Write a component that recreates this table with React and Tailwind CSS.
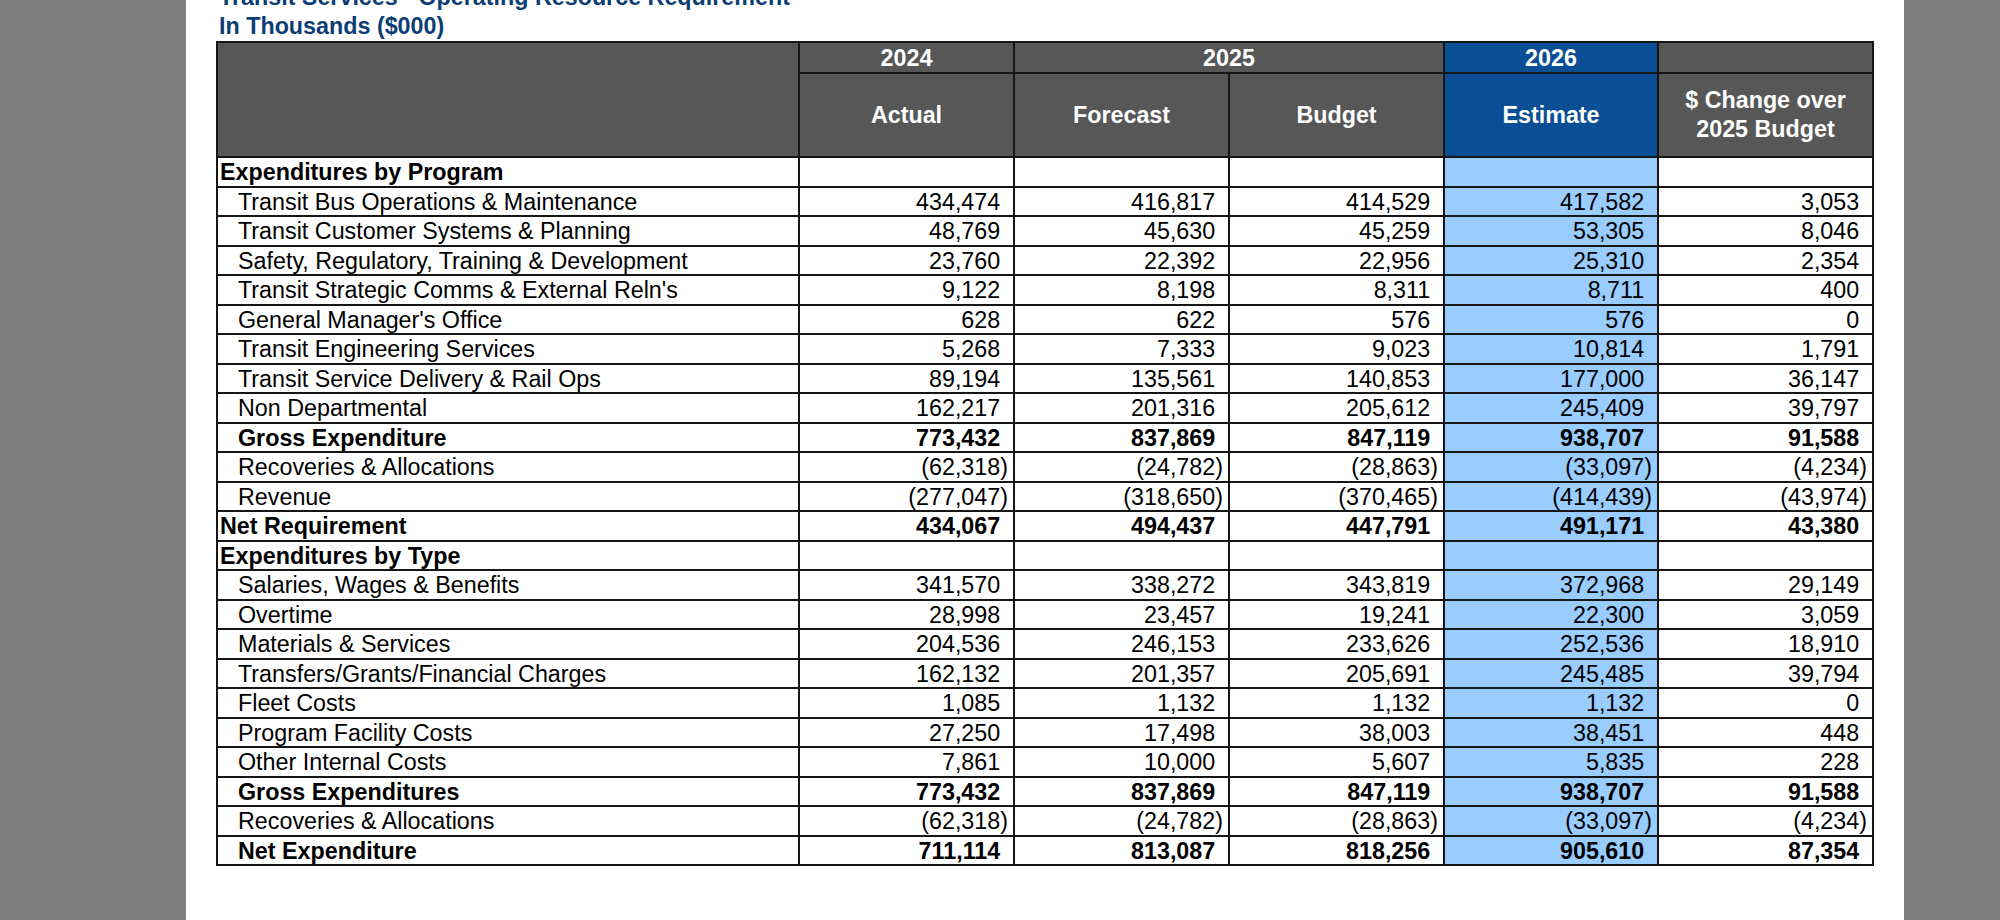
import React from "react";

const rows = [
  { label: "Expenditures by Program", kind: "section" },
  { label: "Transit Bus Operations & Maintenance", v: ["434,474", "416,817", "414,529", "417,582", "3,053"] },
  { label: "Transit Customer Systems & Planning", v: ["48,769", "45,630", "45,259", "53,305", "8,046"] },
  { label: "Safety, Regulatory, Training & Development", v: ["23,760", "22,392", "22,956", "25,310", "2,354"] },
  { label: "Transit Strategic Comms & External Reln's", v: ["9,122", "8,198", "8,311", "8,711", "400"] },
  { label: "General Manager's Office", v: ["628", "622", "576", "576", "0"] },
  { label: "Transit Engineering Services", v: ["5,268", "7,333", "9,023", "10,814", "1,791"] },
  { label: "Transit Service Delivery & Rail Ops", v: ["89,194", "135,561", "140,853", "177,000", "36,147"] },
  { label: "Non Departmental", v: ["162,217", "201,316", "205,612", "245,409", "39,797"] },
  { label: "Gross Expenditure", kind: "boldIndent", v: ["773,432", "837,869", "847,119", "938,707", "91,588"] },
  { label: "Recoveries & Allocations", v: ["(62,318)", "(24,782)", "(28,863)", "(33,097)", "(4,234)"] },
  { label: "Revenue", v: ["(277,047)", "(318,650)", "(370,465)", "(414,439)", "(43,974)"] },
  { label: "Net Requirement", kind: "bold", v: ["434,067", "494,437", "447,791", "491,171", "43,380"] },
  { label: "Expenditures by Type", kind: "section" },
  { label: "Salaries, Wages & Benefits", v: ["341,570", "338,272", "343,819", "372,968", "29,149"] },
  { label: "Overtime", v: ["28,998", "23,457", "19,241", "22,300", "3,059"] },
  { label: "Materials & Services", v: ["204,536", "246,153", "233,626", "252,536", "18,910"] },
  { label: "Transfers/Grants/Financial Charges", v: ["162,132", "201,357", "205,691", "245,485", "39,794"] },
  { label: "Fleet Costs", v: ["1,085", "1,132", "1,132", "1,132", "0"] },
  { label: "Program Facility Costs", v: ["27,250", "17,498", "38,003", "38,451", "448"] },
  { label: "Other Internal Costs", v: ["7,861", "10,000", "5,607", "5,835", "228"] },
  { label: "Gross Expenditures", kind: "boldIndent", v: ["773,432", "837,869", "847,119", "938,707", "91,588"] },
  { label: "Recoveries & Allocations", v: ["(62,318)", "(24,782)", "(28,863)", "(33,097)", "(4,234)"] },
  { label: "Net Expenditure", kind: "boldIndent", v: ["711,114", "813,087", "818,256", "905,610", "87,354"] },
];

function Num({ s }) {
  if (s.startsWith("(")) return <span>{s}</span>;
  return (
    <span>
      {s}
      <span className="invisible">)</span>
    </span>
  );
}

export default function App() {
  const font = { fontFamily: '"Liberation Sans", Arial, sans-serif' };
  const hdr = "bg-[#575757] border-r-2 border-b-2 border-[#161616] text-white font-bold flex justify-center";
  const hdrBlue = "bg-[#0a4f95] border-r-2 border-b-2 border-[#161616] text-white font-bold flex justify-center";
  return (
    <div className="w-[2000px] h-[920px] overflow-hidden bg-[#7f7f7f] flex" style={font}>
      <div className="w-[186px] shrink-0" />
      <div className="w-[1718px] shrink-0 h-full bg-white pl-[30px] text-[23.3px]">
        <div className="text-[#0d3d74] font-bold leading-[28px] pl-[3px] mb-[1px]">
          <div className="mt-[-17px]">Transit Services - Operating Resource Requirement</div>
          <div className="mt-[1px]">In Thousands ($000)</div>
        </div>
        <div className="grid w-[1658px] grid-cols-[582px_215px_215px_215px_214px_215px] grid-rows-[31px_84px_repeat(24,29.5px)] border-l-2 border-t-2 border-[#161616]">
          {/* header */}
          <div className="row-span-2 bg-[#575757] border-r-2 border-b-2 border-[#161616]" />
          <div className={`${hdr} items-end pb-[2px] leading-[23px]`}>2024</div>
          <div className={`${hdr} col-span-2 items-end pb-[2px] leading-[23px]`}>2025</div>
          <div className={`${hdrBlue} items-end pb-[2px] leading-[23px]`}>2026</div>
          <div className={`${hdr}`} />
          <div className={`${hdr} items-center leading-[28.7px]`}>Actual</div>
          <div className={`${hdr} items-center leading-[28.7px]`}>Forecast</div>
          <div className={`${hdr} items-center leading-[28.7px]`}>Budget</div>
          <div className={`${hdrBlue} items-center leading-[28.7px]`}>Estimate</div>
          <div className={`${hdr} items-center text-center leading-[28.7px]`}>
            $ Change over
            <br />
            2025 Budget
          </div>
          {/* body */}
          {rows.map((r, i) => {
            const bold = r.kind === "section" || r.kind === "bold" || r.kind === "boldIndent";
            const indent = r.kind === "section" || r.kind === "bold" ? "pl-[2px]" : "pl-[20px]";
            return (
              <React.Fragment key={i}>
                <div
                  className={`border-r-2 border-b-2 border-[#161616] flex items-end pb-[1.5px] leading-[23px] text-black whitespace-nowrap ${indent} ${bold ? "font-bold" : ""}`}
                >
                  {r.label}
                </div>
                {[0, 1, 2, 3, 4].map((c) => (
                  <div
                    key={c}
                    className={`border-r-2 border-b-2 border-[#161616] flex items-end justify-end pb-[1.5px] pr-[5px] leading-[23px] text-black whitespace-nowrap ${
                      c === 3 ? "bg-[#99ccff]" : "bg-white"
                    } ${bold ? "font-bold" : ""}`}
                  >
                    {r.v ? <Num s={r.v[c]} /> : null}
                  </div>
                ))}
              </React.Fragment>
            );
          })}
        </div>
      </div>
    </div>
  );
}
